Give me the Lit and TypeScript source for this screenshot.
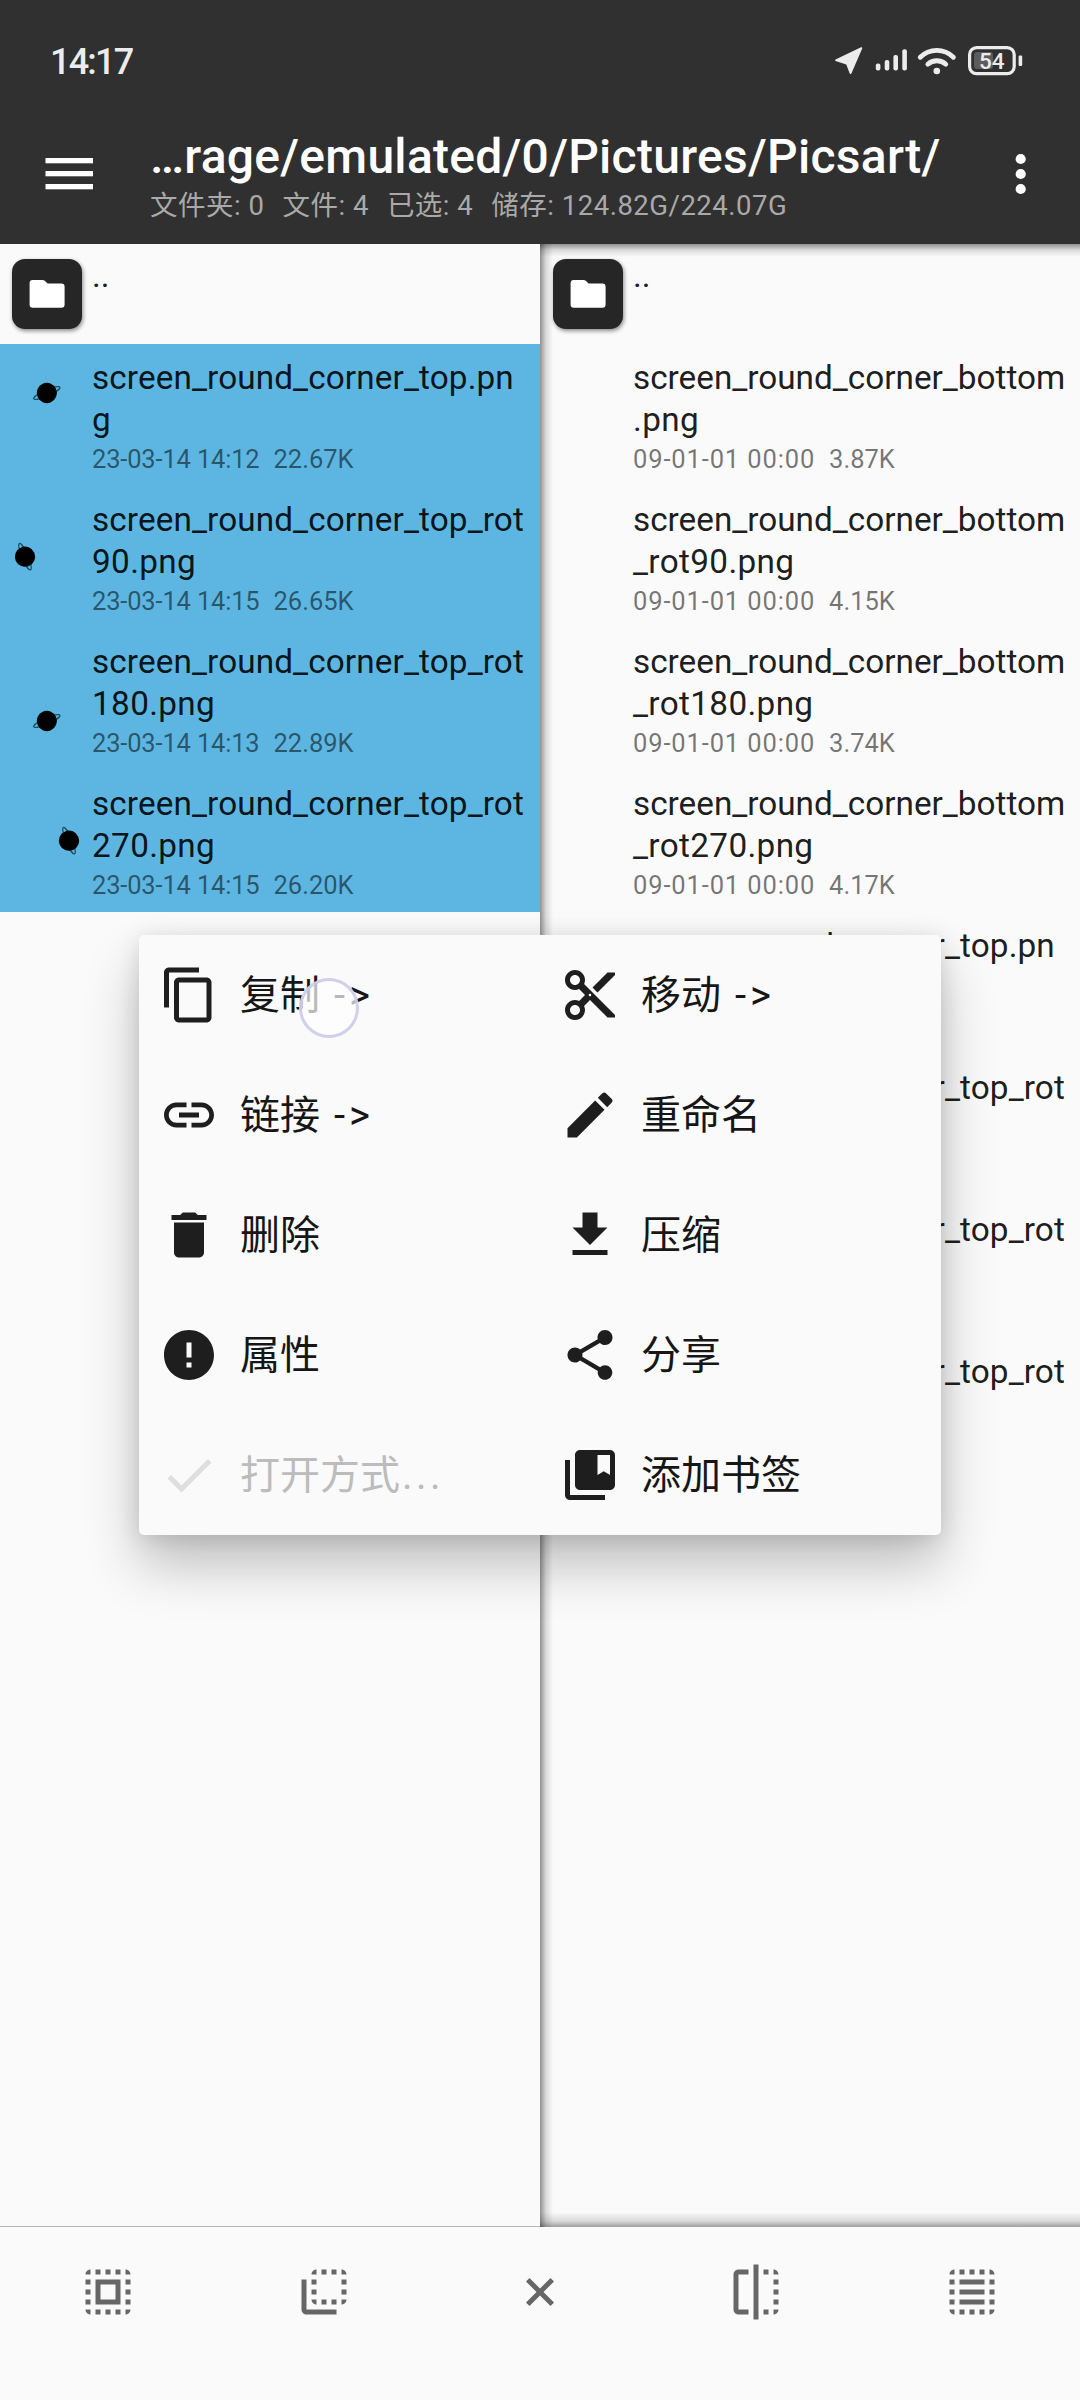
import { LitElement, html, css, svg, nothing } from "lit";
import { customElement, property } from "lit/decorators.js";
import { classMap } from "lit/directives/class-map.js";

interface FileEntry {
  lines: string[];
  date: string;
  size: string;
  planet?: { x: number; y: number; tilt: number };
}

interface MenuEntry {
  icon: string;
  label: string;
  arrow?: boolean;
  disabled?: boolean;
}

const DOTTED_FRAME =
  "M3 5h2V3c-1.1 0-2 .9-2 2zm0 8h2v-2H3v2zm4 8h2v-2H7v2zM3 9h2V7H3v2zm10-6h-2v2h2V3zm6 0v2h2c0-1.1-.9-2-2-2zM5 21v-2H3c0 1.1.9 2 2 2zm-2-4h2v-2H3v2zM9 3H7v2h2V3zm2 18h2v-2h-2v2zm8-8h2v-2h-2v2zm0 8c1.1 0 2-.9 2-2h-2v2zm0-12h2V7h-2v2zm0 8h2v-2h-2v2zm-4 4h2v-2h-2v2zm0-16h2V3h-2v2z";

const ICONS: Record<string, string> = {
  copy: "M16 1H4c-1.1 0-2 .9-2 2v14h2V3h12V1zm3 4H8c-1.1 0-2 .9-2 2v14c0 1.1.9 2 2 2h11c1.1 0 2-.9 2-2V7c0-1.1-.9-2-2-2zm0 16H8V7h11v14z",
  cut: "M9.64 7.64c.23-.5.36-1.05.36-1.64 0-2.21-1.79-4-4-4S2 3.79 2 6s1.79 4 4 4c.59 0 1.14-.13 1.64-.36L10 12l-2.36 2.36C7.14 14.13 6.59 14 6 14c-2.21 0-4 1.79-4 4s1.79 4 4 4 4-1.79 4-4c0-.59-.13-1.14-.36-1.64L12 14l7 7h3v-1L9.64 7.64zM6 8c-1.1 0-2-.89-2-2s.9-2 2-2 2 .89 2 2-.9 2-2 2zm0 12c-1.1 0-2-.89-2-2s.9-2 2-2 2 .89 2 2-.9 2-2 2zm6-7.5c-.28 0-.5-.22-.5-.5s.22-.5.5-.5.5.22.5.5-.22.5-.5.5zM19 3l-6 6 2 2 7-7V3z",
  link: "M3.9 12c0-1.71 1.39-3.1 3.1-3.1h4V7H7c-2.76 0-5 2.24-5 5s2.24 5 5 5h4v-1.9H7c-1.71 0-3.1-1.39-3.1-3.1zM8 13h8v-2H8v2zm9-6h-4v1.9h4c1.71 0 3.1 1.39 3.1 3.1s-1.39 3.1-3.1 3.1h-4V17h4c2.76 0 5-2.24 5-5s-2.24-5-5-5z",
  edit: "M3 17.25V21h3.75L17.81 9.94l-3.75-3.75L3 17.25zM20.71 7.04c.39-.39.39-1.02 0-1.41l-2.34-2.34c-.39-.39-1.02-.39-1.41 0l-1.83 1.83 3.75 3.75 1.83-1.83z",
  trash: "M6 19c0 1.1.9 2 2 2h8c1.1 0 2-.9 2-2V7H6v12zM19 4h-3.5l-1-1h-5l-1 1H5v2h14V4z",
  pack: "M19 9h-4V3H9v6H5l7 7 7-7zM5 18v2h14v-2H5z",
  info: "M12 2C6.48 2 2 6.48 2 12s4.48 10 10 10 10-4.48 10-10S17.52 2 12 2zm1 15h-2v-2h2v2zm0-4h-2V7h2v6z",
  share:
    "M18 16.08c-.76 0-1.44.3-1.96.77L8.91 12.7c.05-.23.09-.46.09-.7s-.04-.47-.09-.7l7.05-4.11c.54.5 1.25.81 2.04.81 1.66 0 3-1.34 3-3s-1.34-3-3-3-3 1.34-3 3c0 .24.04.47.09.7L8.04 9.81C7.5 9.31 6.79 9 6 9c-1.66 0-3 1.34-3 3s1.34 3 3 3c.79 0 1.5-.31 2.04-.81l7.12 4.16c-.05.21-.08.43-.08.65 0 1.61 1.31 2.92 2.92 2.92 1.61 0 2.92-1.31 2.92-2.92s-1.31-2.92-2.92-2.92z",
  check: "M9 16.17L4.83 12l-1.42 1.41L9 19 21 7l-1.41-1.41z",
  bookmarks:
    "M4 6H2v14c0 1.1.9 2 2 2h14v-2H4V6zM20 2H8c-1.1 0-2 .9-2 2v12c0 1.1.9 2 2 2h12c1.1 0 2-.9 2-2V4c0-1.1-.9-2-2-2zm0 10l-2.5-1.5L15 12V4h5v8z",
  selectAll: DOTTED_FRAME + "M7 17h10V7H7v10zm2-8h6v6H9V9z",
  selectRows: DOTTED_FRAME + "M7 7h10v2H7zM7 11h10v2H7zM7 15h10v2H7z",
  flipBack:
    "M9 7H7v2h2V7zm0 4H7v2h2v-2zm0-8c-1.11 0-2 .9-2 2h2V3zm4 12h-2v2h2v-2zm6-12v2h2c0-1.1-.9-2-2-2zm-6 0h-2v2h2V3zM9 17v-2H7c0 1.1.89 2 2 2zm10-4h2v-2h-2v2zm0-4h2V7h-2v2zm0 8c1.1 0 2-.9 2-2h-2v2zM5 7H3v12c0 1.1.89 2 2 2h12v-2H5V7zm10-2h2V3h-2v2zm0 12h2v-2h-2v2z",
  flip: "M15 21h2v-2h-2v2zm4-12h2V7h-2v2zM3 5v14c0 1.1.9 2 2 2h4v-2H5V5h4V3H5c-1.1 0-2 .9-2 2zm16-2v2h2c0-1.1-.9-2-2-2zm-8 20h2V1h-2v22zm8-6h2v-2h-2v2zM15 5h2V3h-2v2zm4 8h2v-2h-2v2zm0 8c1.1 0 2-.9 2-2h-2v2z",
  close: "M17.6 7.8L16.2 6.4 12 10.6 7.8 6.4 6.4 7.8 10.6 12 6.4 16.2 7.8 17.6 12 13.4 16.2 17.6 17.6 16.2 13.4 12z",
};

const glyph = (name: string) =>
  html`<svg class="glyph" viewBox="0 0 24 24" fill="currentColor"><path d=${ICONS[name]}></path></svg>`;

const LEFT_FILES: FileEntry[] = [
  { lines: ["screen_round_corner_top.pn", "g"], date: "23-03-14 14:12", size: "22.67K", planet: { x: 46.8, y: 49, tilt: -24 } },
  { lines: ["screen_round_corner_top_rot", "90.png"], date: "23-03-14 14:15", size: "26.65K", planet: { x: 25, y: 70.7, tilt: 67 } },
  { lines: ["screen_round_corner_top_rot", "180.png"], date: "23-03-14 14:13", size: "22.89K", planet: { x: 46.8, y: 93, tilt: -24 } },
  { lines: ["screen_round_corner_top_rot", "270.png"], date: "23-03-14 14:15", size: "26.20K", planet: { x: 69, y: 70.7, tilt: 67 } },
];

const RIGHT_FILES: FileEntry[] = [
  { lines: ["screen_round_corner_bottom", ".png"], date: "09-01-01 00:00", size: "3.87K" },
  { lines: ["screen_round_corner_bottom", "_rot90.png"], date: "09-01-01 00:00", size: "4.15K" },
  { lines: ["screen_round_corner_bottom", "_rot180.png"], date: "09-01-01 00:00", size: "3.74K" },
  { lines: ["screen_round_corner_bottom", "_rot270.png"], date: "09-01-01 00:00", size: "4.17K" },
  { lines: ["screen_round_corner_top.pn"], date: "", size: "" },
  { lines: ["screen_round_corner_top_rot"], date: "", size: "" },
  { lines: ["screen_round_corner_top_rot"], date: "", size: "" },
  { lines: ["screen_round_corner_top_rot"], date: "", size: "" },
];

const MENU: MenuEntry[] = [
  { icon: "copy", label: "复制", arrow: true },
  { icon: "cut", label: "移动", arrow: true },
  { icon: "link", label: "链接", arrow: true },
  { icon: "edit", label: "重命名" },
  { icon: "trash", label: "删除" },
  { icon: "pack", label: "压缩" },
  { icon: "info", label: "属性" },
  { icon: "share", label: "分享" },
  { icon: "check", label: "打开方式", disabled: true },
  { icon: "bookmarks", label: "添加书签" },
];

@customElement("status-bar")
class StatusBar extends LitElement {
  static styles = css`
    :host {
      display: flex;
      height: 122px;
      box-sizing: border-box;
      padding: 0 0 0 50px;
      align-items: center;
      justify-content: space-between;
      color: #ececec;
    }
    .clock {
      font-size: 36px;
      line-height: 36px;
      font-weight: 500;
      letter-spacing: -1.8px;
      padding-top: 2px;
    }
    .signals {
      display: block;
      width: 260px;
      height: 122px;
    }
    .percent {
      font-size: 22.5px;
      font-weight: 500;
    }
  `;
  render() {
    return html`
      <span class="clock">14:17</span>
      <svg class="signals" viewBox="820 0 260 122" fill="currentColor">
        <path d="M835.5 59.5 L861 47.3 Q862.6 47 862.2 48.6 L851.4 73.5 Q850.4 74.8 849.6 73.3 L846.3 64.6 L835.6 61 Q834.4 60.2 835.5 59.5z"></path>
        <rect x="875.8" y="63.6" width="4.6" height="7" rx="2"></rect>
        <rect x="884.7" y="60" width="4.6" height="10.6" rx="2"></rect>
        <rect x="893.4" y="55" width="4.6" height="15.6" rx="2"></rect>
        <rect x="902.3" y="49.3" width="4.6" height="21.3" rx="2"></rect>
        <g fill="none" stroke="currentColor" stroke-width="4.8">
          <path d="M920.2 57.2 A23.5 23.5 0 0 1 953.4 57.2" stroke-linecap="round"></path>
          <path d="M927.8 64.2 A13.4 13.4 0 0 1 945.8 64.2" stroke-linecap="round"></path>
        </g>
        <circle cx="936.8" cy="71" r="3.3"></circle>
        <rect x="974" y="52" width="19" height="17" rx="3" fill="#5c5c5c"></rect>
        <rect x="969.6" y="47.6" width="44.6" height="26" rx="7" fill="none" stroke="currentColor" stroke-width="3.2"></rect>
        <rect x="1018.6" y="55.5" width="3.6" height="10.4" rx="1.2"></rect>
        <text class="percent" x="991.7" y="69" text-anchor="middle">54</text>
      </svg>
    `;
  }
}

@customElement("path-bar")
class PathBar extends LitElement {
  static styles = css`
    :host {
      display: flex;
      height: 122px;
      color: #fff;
    }
    .nav {
      display: block;
      width: 150px;
      height: 122px;
      flex: none;
    }
    .heading {
      flex: 1;
      display: flex;
      flex-direction: column;
      padding-top: 8px;
      white-space: pre;
    }
    .path {
      font-size: 48px;
      line-height: 54px;
      font-weight: 500;
      letter-spacing: 0.28px;
    }
    .stats {
      display: flex;
      gap: 18px;
      font-size: 27.5px;
      line-height: 36px;
      margin-top: 4px;
      letter-spacing: 0.5px;
      color: #a9a9a9;
    }
    .more {
      display: block;
      width: 120px;
      height: 122px;
      flex: none;
    }
  `;
  render() {
    return html`
      <svg class="nav" viewBox="0 0 150 122" fill="currentColor">
        <rect x="45.5" y="36" width="47.5" height="5.3"></rect>
        <rect x="45.5" y="49" width="47.5" height="5.3"></rect>
        <rect x="45.5" y="62" width="47.5" height="5.3"></rect>
      </svg>
      <div class="heading">
        <span class="path">…rage/emulated/0/Pictures/Picsart/</span>
        <div class="stats">
          <span>文件夹: 0</span><span>文件: 4</span><span>已选: 4</span><span>储存: 124.82G/224.07G</span>
        </div>
      </div>
      <svg class="more" viewBox="960 0 120 122" fill="currentColor">
        <circle cx="1020.7" cy="37" r="5.1"></circle>
        <circle cx="1020.7" cy="52" r="5.1"></circle>
        <circle cx="1020.7" cy="67" r="5.1"></circle>
      </svg>
    `;
  }
}

@customElement("file-pane")
class FilePane extends LitElement {
  @property({ attribute: false }) files: FileEntry[] = [];
  @property({ type: Boolean }) selected = false;

  static styles = css`
    :host {
      display: block;
      overflow: hidden;
    }
    .up {
      display: flex;
      height: 100px;
      box-sizing: border-box;
      padding: 15px 0 0 12px;
      gap: 10px;
    }
    .tile {
      display: flex;
      align-items: center;
      justify-content: center;
      width: 70px;
      height: 70px;
      border-radius: 13px;
      background: #262626;
      box-shadow: 1px 2px 4px rgba(0, 0, 0, 0.45);
    }
    .folder {
      display: block;
      width: 36px;
      height: 28px;
      fill: #fff;
    }
    .dots,
    .name {
      font-size: 33.3px;
      line-height: 42.5px;
      color: rgba(0, 0, 0, 0.9);
    }
    .dots {
      margin-top: -4px;
    }
    .name {
      letter-spacing: 0.11px;
    }
    .wide {
      letter-spacing: 0;
    }
    .rest {
      letter-spacing: 0.35px;
    }
    .row {
      display: flex;
      height: 142px;
    }
    .picked {
      background: #5cb6e1;
    }
    .thumb {
      display: block;
      width: 92px;
      height: 142px;
      flex: none;
    }
    .text {
      display: flex;
      flex-direction: column;
      padding-top: 12.5px;
      white-space: pre;
    }
    .meta {
      font-size: 25.5px;
      line-height: 35px;
      color: rgba(0, 0, 0, 0.54);
    }
    .date {
      letter-spacing: 0.87px;
    }
    .picked .date {
      letter-spacing: -0.17px;
    }
    .size {
      padding-left: 14px;
    }
  `;
  render() {
    return html`
      <div class="up">
        <div class="tile">
          <svg class="folder" viewBox="0 0 36 28">
            <path d="M3.6 0h9.6q1.8 0 2.8 1l2.6 2.6h13.8q3.2 0 3.2 3.2v17.8q0 3.2-3.2 3.2H3.8q-3.2 0-3.2-3.2V3q0-3 3-3z"></path>
          </svg>
        </div>
        <span class="dots">..</span>
      </div>
      ${this.files.map(
        (f) => html`
          <div class=${classMap({ row: true, picked: this.selected })}>
            <svg class="thumb" viewBox="0 0 92 142">
              ${f.planet
                ? svg`<g transform="translate(${f.planet.x} ${f.planet.y}) rotate(${f.planet.tilt})">
                    <ellipse rx="14.3" ry="3" fill="none" stroke="#1d4a60" stroke-width="1.3"></ellipse>
                    <circle r="10.1" fill="#000"></circle>
                  </g>`
                : nothing}
            </svg>
            <div class="text">
              ${f.lines.map(
                (l, i) =>
                  html`<span class=${classMap({ name: true, wide: l.endsWith("bottom"), rest: i > 0 })}>${l}</span>`,
              )}
              ${f.date
                ? html`<span class="meta"><span class="date">${f.date}</span><span class="size">${f.size}</span></span>`
                : nothing}
            </div>
          </div>
        `,
      )}
    `;
  }
}

@customElement("action-menu")
class ActionMenu extends LitElement {
  static styles = css`
    :host {
      display: grid;
      grid-template-columns: 401px 401px;
      grid-auto-rows: 120px;
      background: #fafafa;
      border-radius: 5px;
      box-shadow: 0 30px 54px rgba(0, 0, 0, 0.24), 0 3px 22px rgba(0, 0, 0, 0.12);
    }
    .item {
      display: flex;
      align-items: center;
      padding-left: 20px;
      gap: 21px;
      color: #1e1e1e;
      font-size: 40px;
      line-height: 60px;
      white-space: pre;
    }
    .label {
      color: #161616;
      font-weight: 400;
      padding-top: 2px;
    }
    .glyph {
      display: block;
      width: 60px;
      height: 60px;
    }
    .disabled {
      color: #dedede;
    }
    .disabled .label {
      color: #bcbcbc;
    }
    .arrow {
      margin-left: 14px;
      letter-spacing: 4px;
    }
    .ellipsis {
      letter-spacing: 3.5px;
      margin-left: 2px;
    }
    .touch {
      position: absolute;
      left: 160px;
      top: 43px;
      width: 54px;
      height: 54px;
      border: 3px solid rgba(200, 200, 230, 0.85);
      border-radius: 50%;
      background: rgba(253, 253, 255, 0.7);
    }
  `;
  render() {
    return html`
      ${MENU.map(
        (m) => html`
          <div class=${classMap({ item: true, disabled: !!m.disabled })}>
            ${glyph(m.icon)}
            <span class="label"
              >${m.label}${m.arrow ? html`<span class="arrow">-&gt;</span>` : nothing}${m.disabled
                ? html`<span class="ellipsis">...</span>`
                : nothing}</span
            >
          </div>
        `,
      )}
      <div class="touch"></div>
    `;
  }
}

@customElement("tool-bar")
class ToolBar extends LitElement {
  static styles = css`
    :host {
      display: grid;
      grid-template-columns: repeat(5, 1fr);
      height: 173px;
      box-sizing: border-box;
      padding-top: 35px;
      background: #fafafa;
      color: #666;
    }
    .slot {
      display: flex;
      justify-content: center;
      align-items: center;
      height: 60px;
    }
    .glyph {
      display: block;
      width: 60px;
      height: 60px;
    }
  `;
  render() {
    return ["selectAll", "flipBack", "close", "flip", "selectRows"].map(
      (n) => html`<div class="slot">${glyph(n)}</div>`,
    );
  }
}

@customElement("app-root")
class AppRoot extends LitElement {
  static styles = css`
    :host {
      display: flex;
      flex-direction: column;
      position: relative;
      width: 1080px;
      height: 2400px;
      overflow: hidden;
      background: #fafafa;
      font-family: Roboto, "Noto Sans CJK SC", sans-serif;
    }
    .header {
      background: #303030;
      height: 244px;
      flex: none;
    }
    .panes {
      display: grid;
      grid-template-columns: 540px 540px;
      height: 1983px;
      flex: none;
    }
    .left {
      border-bottom: 1px solid #b6b6b6;
    }
    .right {
      padding-left: 1px;
      background: linear-gradient(to right, rgba(0, 0, 0, 0.42), rgba(0, 0, 0, 0.13) 6px, rgba(0, 0, 0, 0) 13px),
        linear-gradient(to bottom, rgba(0, 0, 0, 0.42), rgba(0, 0, 0, 0.13) 6px, rgba(0, 0, 0, 0) 13px),
        linear-gradient(to top, rgba(0, 0, 0, 0.36), rgba(0, 0, 0, 0.13) 6px, rgba(0, 0, 0, 0) 15px);
    }
    .menu {
      position: absolute;
      left: 139px;
      top: 935px;
      width: 802px;
      height: 600px;
    }
  `;
  render() {
    return html`
      <div class="header">
        <status-bar></status-bar>
        <path-bar></path-bar>
      </div>
      <div class="panes">
        <file-pane class="left" selected .files=${LEFT_FILES}></file-pane>
        <file-pane class="right" .files=${RIGHT_FILES}></file-pane>
      </div>
      <tool-bar></tool-bar>
      <action-menu class="menu"></action-menu>
    `;
  }
}
